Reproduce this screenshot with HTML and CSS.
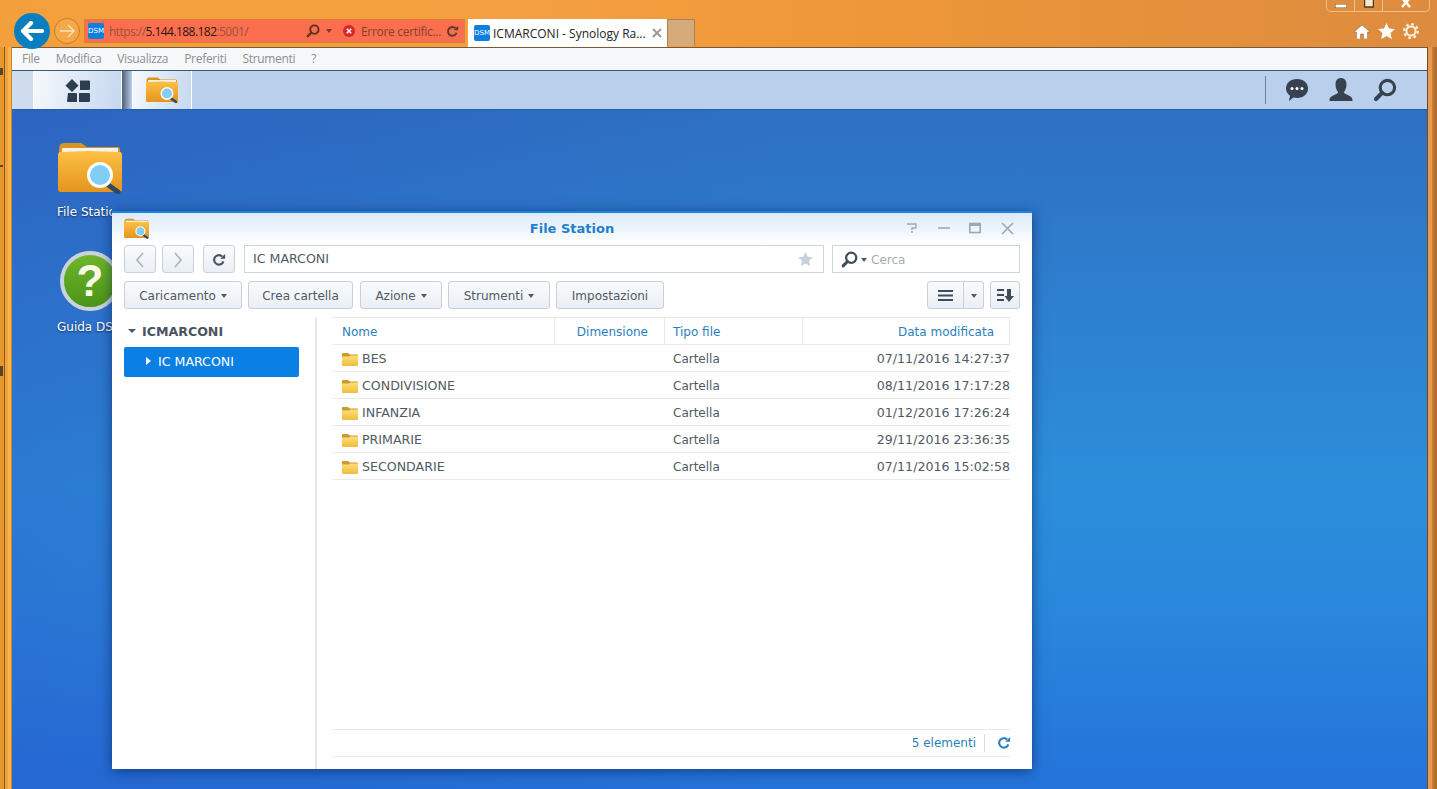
FILE: index.html
```html
<!DOCTYPE html>
<html lang="en">
<head>
    <meta charset="UTF-8">
    <meta name="viewport" content="width=device-width, initial-scale=1.0">
    <title>ICMARCONI - Synology RackStation</title>
    <link rel="stylesheet" href="styles.css">
</head>
<body>
    <svg class="icon-defs" width="0" height="0">
        <defs>
            <linearGradient id="folderBody" x1="0" y1="0" x2="0" y2="1">
                <stop offset="0" stop-color="#fdc044"/>
                <stop offset="1" stop-color="#e4951f"/>
            </linearGradient>
            <linearGradient id="smallFolder" x1="0" y1="0" x2="0" y2="1">
                <stop offset="0" stop-color="#fde07a"/>
                <stop offset="1" stop-color="#f0bc3c"/>
            </linearGradient>
            <symbol id="fs-icon" viewBox="0 0 64 52">
                <path d="M1 8 Q1 1 6 1 H23 L29 5 H60 Q62 5 62 8 V20 H1Z" fill="#d99426"/>
                <rect x="4" y="6" width="56" height="8" fill="#f4f1e6"/>
                <path d="M0 13 Q0 10 3 10 L30 9 L62 10 Q64 10 64 13 V47 Q64 50 61 50 H3 Q0 50 0 47Z" fill="url(#folderBody)"/>
                <path d="M49 42 L60 50" stroke="#2d4a5e" stroke-width="5" stroke-linecap="round"/>
                <circle cx="42" cy="33" r="11.5" fill="#80cdf6" stroke="#fdfdf6" stroke-width="3"/>
            </symbol>
            <symbol id="folder" viewBox="0 0 16 14">
                <path d="M0 2 Q0 1 1 1 H6 L8 2.5 H15 Q16 2.5 16 3.5 V6 H0Z" fill="#c99a30"/>
                <path d="M0 4.5 L7 4.5 L8.5 3.5 H16 V13 Q16 14 15 14 H1 Q0 14 0 13Z" fill="url(#smallFolder)"/>
            </symbol>
            <symbol id="lens" viewBox="0 0 20 20">
                <circle cx="12" cy="8" r="6" fill="none" stroke="currentColor" stroke-width="2.6"/>
                <path d="M7.5 12.5 L2.5 17.5" stroke="currentColor" stroke-width="3.4" stroke-linecap="round"/>
            </symbol>
            <symbol id="reload" viewBox="0 0 16 16">
                <path d="M13 9.5 A5.4 5.4 0 1 1 11.6 4" fill="none" stroke="currentColor" stroke-width="2.4"/>
                <path d="M9.4 6.6 H15 V1Z" fill="currentColor"/>
            </symbol>
        </defs>
    </svg>

    <header class="browser-top">
        <div class="nav-back">
            <svg width="24" height="20" viewBox="0 0 24 20"><path d="M11 2 L3 10 L11 18 M3 10 H22" fill="none" stroke="#fff" stroke-width="4.2" stroke-linecap="round" stroke-linejoin="round"/></svg>
        </div>
        <div class="nav-forward">
            <svg width="16" height="14" viewBox="0 0 16 14"><path d="M9 1 L15 7 L9 13 M1 7 H15" fill="none" stroke="#f7e4c0" stroke-width="1.4"/></svg>
        </div>
        <div class="address-bar">
            <span class="favicon">DSM</span>
            <span class="url">https://<b>5.144.188.182</b>:5001/</span>
            <svg class="addr-lens" width="14" height="14"><use href="#lens"/></svg>
            <span class="addr-caret"></span>
            <svg class="addr-error" width="14" height="14" viewBox="0 0 14 14"><circle cx="7" cy="7" r="6" fill="#d8262c"/><path d="M4.8 4.8 L9.2 9.2 M9.2 4.8 L4.8 9.2" stroke="#fff" stroke-width="1.6"/></svg>
            <span class="addr-error-text">Errore certific...</span>
            <svg class="addr-reload" width="13" height="13"><use href="#reload"/></svg>
        </div>
        <div class="tab">
            <span class="favicon">DSM</span>
            <span class="tab-title">ICMARCONI - Synology Ra...</span>
            <svg width="10" height="10" viewBox="0 0 10 10"><path d="M1 1 L9 9 M9 1 L1 9" stroke="#9a9a9a" stroke-width="2"/></svg>
        </div>
        <div class="tab-new"></div>
        <div class="browser-tools">
            <svg width="16" height="15" viewBox="0 0 16 15"><path d="M8 1 L16 8 H13.5 V15 H9.5 V10 H6.5 V15 H2.5 V8 H0Z" fill="#fff" stroke="#8a6a3a" stroke-width=".5"/></svg>
            <svg width="17" height="16" viewBox="0 0 17 16"><path d="M8.5 0 L11 5.4 L17 6.1 L12.6 10.1 L13.8 16 L8.5 13 L3.2 16 L4.4 10.1 L0 6.1 L6 5.4Z" fill="#fff"/></svg>
            <svg width="16" height="16" viewBox="0 0 16 16"><circle cx="8" cy="8" r="4.6" fill="none" stroke="#fbf3e2" stroke-width="2"/><circle cx="8" cy="8" r="6.8" fill="none" stroke="#fbf3e2" stroke-width="2.4" stroke-dasharray="2.6 2.74"/></svg>
        </div>
        <div class="win-buttons">
            <div class="win-btn win-min"><svg width="12" height="4"><rect width="12" height="4" fill="#fff" stroke="#6b5230"/></svg></div>
            <div class="win-btn win-max"><svg width="10" height="8"><rect x=".5" y="-3" width="9" height="10" fill="#fbe6c8" stroke="#4a3a28" stroke-width="1.5"/></svg></div>
            <div class="win-btn win-close"><svg width="12" height="8" viewBox="0 0 12 8"><path d="M2 -2 L10 7 M10 -2 L2 7" stroke="#fff" stroke-width="2.5"/></svg></div>
        </div>
    </header>

    <div class="page">
        <nav class="menu-bar">
            <a href="#">File</a>
            <a href="#">Modifica</a>
            <a href="#">Visualizza</a>
            <a href="#">Preferiti</a>
            <a href="#">Strumenti</a>
            <a href="#">?</a>
        </nav>

        <div class="taskbar">
            <div class="task-btn task-home">
                <svg width="26" height="24" viewBox="0 0 26 24"><path d="M7 1 L13.5 7.5 L7 14 L.5 7.5Z M15 2.5 H24 Q25 2.5 25 3.5 V11 Q25 12 24 12 H15Z M3 15 H11 A1 1 0 0 1 12 16 V24 H3 A1 1 0 0 1 2 23Z M14 15 H24 A1 1 0 0 1 25 16 V23 A1 1 0 0 1 24 24 H14Z" fill="#2f3e4e"/></svg>
            </div>
            <div class="task-gap"></div>
            <div class="task-btn task-fs">
                <svg width="32" height="26"><use href="#fs-icon"/></svg>
            </div>
            <div class="task-right">
                <svg width="24" height="24" viewBox="0 0 24 24"><path d="M12 1 C18.5 1 23 5 23 10.5 C23 16 18.5 20 12 20 C10.6 20 9.4 19.8 8.4 19.500 L4 23 L5 17.8 C2.6 16 1 13.5 1 10.5 C1 5 5.5 1 12 1Z" fill="#36424f"/><circle cx="7" cy="10.5" r="1.5" fill="#fff"/><circle cx="12" cy="10.5" r="1.5" fill="#fff"/><circle cx="17" cy="10.5" r="1.5" fill="#fff"/></svg>
                <svg width="24" height="24" viewBox="0 0 24 24"><path d="M12 0 C16 0 17.5 3 17.5 6.5 C17.5 10 16 13 14.8 14.3 C15 16.5 23.5 17.3 23.5 22 V23 H.5 V22 C.5 17.3 9 16.5 9.2 14.3 C8 13 6.500 10 6.500 6.500 C6.500 3 8 0 12 0Z" fill="#36424f"/></svg>
                <svg class="task-lens" width="24" height="24"><use href="#lens"/></svg>
            </div>
        </div>

        <main class="desktop">
            <div class="desk-icon desk-fs">
                <svg width="64" height="52"><use href="#fs-icon"/></svg>
                <span>File Station</span>
            </div>
            <div class="desk-icon desk-help">
                <div class="help-ball">?</div>
                <span>Guida DSM</span>
            </div>

            <section class="window">
                <div class="win-title">
                    <svg width="25" height="21"><use href="#fs-icon"/></svg>
                    <h1>File Station</h1>
                    <div class="title-tools">
                        <svg width="12" height="12" viewBox="0 0 12 12"><path d="M1 2 H10 V6 H6 V8 M5 10 H7" fill="none" stroke="#9aa8b6" stroke-width="1.4"/></svg>
                        <svg width="12" height="12" viewBox="0 0 12 12"><path d="M0 6 H12" stroke="#9aa8b6" stroke-width="1.6"/></svg>
                        <svg width="12" height="12" viewBox="0 0 12 12"><rect x=".8" y="1.5" width="10.400" height="9" fill="none" stroke="#9aa8b6" stroke-width="1.6"/><path d="M0 3 H12" stroke="#9aa8b6" stroke-width="2"/></svg>
                        <svg width="13" height="13" viewBox="0 0 13 13"><path d="M1 1 L12 12 M12 1 L1 12" stroke="#9aa8b6" stroke-width="1.6"/></svg>
                    </div>
                </div>

                <div class="toolbar toolbar-nav">
                    <button class="btn btn-icon"><svg width="10" height="16" viewBox="0 0 10 16"><path d="M8 1 L2 8 L8 15" fill="none" stroke="#a9b3bd" stroke-width="1.6"/></svg></button>
                    <button class="btn btn-icon"><svg width="10" height="16" viewBox="0 0 10 16"><path d="M2 1 L8 8 L2 15" fill="none" stroke="#a9b3bd" stroke-width="1.6"/></svg></button>
                    <button class="btn btn-icon btn-reload"><svg width="14" height="14"><use href="#reload"/></svg></button>
                    <div class="path-field">
                        <span>IC MARCONI</span>
                        <svg width="15" height="14" viewBox="0 0 17 16"><path d="M8.5 0 L11 5.4 L17 6.1 L12.6 10.1 L13.8 16 L8.5 13 L3.2 16 L4.4 10.1 L0 6.1 L6 5.4Z" fill="#c6d0da"/></svg>
                    </div>
                    <div class="search-field">
                        <svg width="17" height="17"><use href="#lens"/></svg>
                        <i class="caret"></i>
                        <span>Cerca</span>
                    </div>
                </div>

                <div class="toolbar toolbar-actions">
                    <button class="btn btn-upload">Caricamento <i class="caret"></i></button>
                    <button class="btn btn-create">Crea cartella</button>
                    <button class="btn btn-action">Azione <i class="caret"></i></button>
                    <button class="btn btn-tools">Strumenti <i class="caret"></i></button>
                    <button class="btn btn-settings">Impostazioni</button>
                    <div class="view-group">
                        <button class="btn btn-view"><svg width="15" height="11" viewBox="0 0 15 11"><path d="M0 1 H15 M0 5.500 H15 M0 10 H15" stroke="#3f4c59" stroke-width="2"/></svg></button>
                        <button class="btn btn-view-menu"><i class="caret"></i></button>
                    </div>
                    <button class="btn btn-sort"><svg width="17" height="13" viewBox="0 0 17 13"><path d="M0 1 H7 M0 6 H7 M0 11 H7" stroke="#3f4c59" stroke-width="2"/><path d="M10 0 H14 V7 H17 L12 13 L7.500 7 H10Z" fill="#3f4c59"/></svg></button>
                </div>

                <div class="win-body">
                    <aside class="tree">
                        <div class="tree-root"><i class="caret"></i>ICMARCONI</div>
                        <div class="tree-item"><i class="tree-arrow"></i>IC MARCONI</div>
                    </aside>
                    <div class="files">
                        <div class="file-row file-head">
                            <div class="col-name">Nome</div>
                            <div class="col-size">Dimensione</div>
                            <div class="col-type">Tipo file</div>
                            <div class="col-date">Data modificata</div>
                        </div>
                        <div class="file-row">
                            <div class="col-name"><svg width="16" height="14"><use href="#folder"/></svg>BES</div>
                            <div class="col-size"></div>
                            <div class="col-type">Cartella</div>
                            <div class="col-date">07/11/2016 14:27:37</div>
                        </div>
                        <div class="file-row">
                            <div class="col-name"><svg width="16" height="14"><use href="#folder"/></svg>CONDIVISIONE</div>
                            <div class="col-size"></div>
                            <div class="col-type">Cartella</div>
                            <div class="col-date">08/11/2016 17:17:28</div>
                        </div>
                        <div class="file-row">
                            <div class="col-name"><svg width="16" height="14"><use href="#folder"/></svg>INFANZIA</div>
                            <div class="col-size"></div>
                            <div class="col-type">Cartella</div>
                            <div class="col-date">01/12/2016 17:26:24</div>
                        </div>
                        <div class="file-row">
                            <div class="col-name"><svg width="16" height="14"><use href="#folder"/></svg>PRIMARIE</div>
                            <div class="col-size"></div>
                            <div class="col-type">Cartella</div>
                            <div class="col-date">29/11/2016 23:36:35</div>
                        </div>
                        <div class="file-row">
                            <div class="col-name"><svg width="16" height="14"><use href="#folder"/></svg>SECONDARIE</div>
                            <div class="col-size"></div>
                            <div class="col-type">Cartella</div>
                            <div class="col-date">07/11/2016 15:02:58</div>
                        </div>
                        <div class="status-bar">
                            <span class="status-count">5 elementi</span>
                            <svg width="14" height="14"><use href="#reload"/></svg>
                        </div>
                    </div>
                </div>
            </section>
        </main>
    </div>
</body>
</html>
```

FILE: styles.css
```css
* {
    box-sizing: border-box;
}
body {
    margin: 0;
    width: 1437px;
    height: 789px;
    overflow: hidden;
    padding: 0 10px 0 12px;
    font-family: "DejaVu Sans", Verdana, sans-serif;
    font-size: 12px;
    color: #505a64;
    background:
        linear-gradient(#5a4426, #5a4426) 0 68px / 3px 7px no-repeat,
        linear-gradient(#5a4426, #5a4426) 0 165px / 3px 2px no-repeat,
        linear-gradient(#5a4426, #5a4426) 0 366px / 3px 10px no-repeat,
        linear-gradient(90deg, #e8962e 0 4px, #7d5a22 4px 5px, #f2a23a 5px 8px, #fbb348 8px 11px, #c98a34 11px 12px) left 47px / 12px 742px no-repeat,
        linear-gradient(90deg, #6f4a26 0 1px, #e59a50 1px 5px, #c47a30 5px 7px, #b56c2c 7px 10px) right 47px / 10px 742px no-repeat,
        linear-gradient(90deg, #f39f3c 0%, #f5a040 35%, #ee9738 60%, #dd8b3f 100%);
}
.icon-defs {
    position: absolute;
}
.browser-top {
    position: relative;
    height: 47px;
    margin-left: -12px;
    margin-right: -10px;
    display: flex;
    padding: 19px 0 0 84px;
    font-family: "Open Sans", sans-serif;
}
.nav-back {
    position: absolute;
    left: 14px;
    top: 13px;
    width: 36px;
    height: 36px;
    border-radius: 50%;
    background: #0a7fc0;
    display: flex;
    align-items: center;
    justify-content: center;
    z-index: 1;
}
.nav-forward {
    position: absolute;
    left: 54px;
    top: 18px;
    width: 26px;
    height: 26px;
    border-radius: 50%;
    border: 1px solid #c97f22;
    background: #f4a848;
    display: flex;
    align-items: center;
    justify-content: center;
}
.address-bar {
    width: 381px;
    height: 24px;
    display: flex;
    align-items: center;
    padding-left: 3px;
    background: #fb6f4e;
    border: 1px solid #d9803a;
    color: #9a5240;
}
.favicon {
    width: 16px;
    height: 16px;
    flex: none;
    border-radius: 2px;
    background: #0d7fe0;
    color: #fff;
    font-family: "DejaVu Sans", sans-serif;
    font-size: 7px;
    line-height: 16px;
    text-align: center;
}
.url {
    margin-left: 5px;
    width: 197px;
    white-space: nowrap;
    letter-spacing: -.55px;
}
.url b {
    font-weight: normal;
    color: #2a1510;
}
.addr-lens {
    color: #5d3020;
    flex: none;
}
.addr-caret {
    width: 0;
    height: 0;
    margin-left: 6px;
    border: 3px solid transparent;
    border-top: 4px solid #7a3a28;
    border-bottom: 0;
}
.addr-error {
    margin-left: 10px;
    flex: none;
}
.addr-error-text {
    margin-left: 5px;
    width: 85px;
    flex: none;
    white-space: nowrap;
    letter-spacing: -.3px;
    color: #7d4234;
}
.addr-reload {
    margin-left: 0;
    flex: none;
    color: #5d3c30;
}
.tab {
    width: 199px;
    height: 28px;
    margin-left: 3px;
    padding: 0 5px 0 6px;
    display: flex;
    align-items: center;
    background: #fff;
    color: #222;
    position: relative;
    z-index: 1;
}
.tab-title {
    margin-left: 3px;
    width: 159px;
    flex: none;
    white-space: nowrap;
}
.tab-new {
    width: 28px;
    height: 27px;
    background: #d6ab7c;
    border: 1px solid #a88458;
    border-bottom: 0;
}
.browser-tools {
    position: absolute;
    left: 1354px;
    top: 23px;
    width: 65px;
    display: flex;
    align-items: center;
    justify-content: space-between;
}
.win-buttons {
    position: absolute;
    left: 1326px;
    top: 0;
    height: 12px;
    display: flex;
    border: 1px solid #f0c088;
    border-top: 0;
    border-radius: 0 0 5px 5px;
}
.win-btn {
    display: flex;
    align-items: flex-end;
    justify-content: center;
    padding-bottom: 3px;
    border-left: 1px solid #f0c088;
}
.win-min {
    width: 27px;
    border-left: 0;
}
.win-max {
    width: 28px;
}
.win-close {
    width: 47px;
}
.page {
    height: 742px;
    display: flex;
    flex-direction: column;
    border-top: 1px solid #7a5a36;
}
.menu-bar {
    height: 22px;
    display: flex;
    align-items: center;
    gap: 16px;
    padding: 0 0 2px 10px;
    background: #f7f8f9;
    font-family: "Open Sans", sans-serif;
    letter-spacing: -.3px;
}
.menu-bar a {
    color: #8b8f94;
    text-decoration: none;
}
.taskbar {
    height: 40px;
    display: flex;
    background: linear-gradient(90deg, #cfdcee 0 21px, #b9cfec 21px);
    border-top: 1px solid #3c5a78;
    border-bottom: 1px solid #1f60b4;
}
.task-btn {
    display: flex;
    align-items: center;
    justify-content: center;
    background: linear-gradient(100deg, #f6f9fd, #c6d7ef);
    border-left: 1px solid #fff;
    border-right: 1px solid #fff;
    height: 100%;
}
.task-home {
    margin-left: 21px;
    width: 89px;
}
.task-gap {
    width: 10px;
    background: linear-gradient(90deg, #4d5f78, #b9cfec);
}
.task-fs {
    width: 60px;
}
.task-right {
    margin-left: auto;
    margin-right: 30px;
    display: flex;
    align-items: center;
    gap: 20px;
    height: 100%;
    padding-left: 20px;
    position: relative;
    color: #36424f;
}
.task-right::before {
    content: "";
    position: absolute;
    left: 0;
    top: 5px;
    bottom: 5px;
    width: 1px;
    background: #6f86a3;
}
.desktop {
    flex: 1;
    position: relative;
    background:
        linear-gradient(90deg, rgba(40,70,190,.28), rgba(40,70,190,0) 55%),
        linear-gradient(#2e70c2 0%, #2d80d0 30%, #2c8eda 55%, #2a88dc 72%, #2473da 100%);
}
.desk-icon {
    position: absolute;
    left: 34px;
    width: 88px;
    display: flex;
    flex-direction: column;
    align-items: center;
    color: #fff;
    text-shadow: 0 1px 2px rgba(0,0,0,.6);
    white-space: nowrap;
}
.desk-icon span {
    align-self: flex-start;
    width: 66px;
    padding-left: 11px;
    overflow: hidden;
}
.desk-fs {
    top: 32px;
}
.desk-fs span {
    margin-top: 11px;
}
.desk-help {
    top: 141px;
}
.desk-help span {
    margin-top: 9px;
}
.help-ball {
    width: 60px;
    height: 60px;
    border-radius: 50%;
    border: 4px solid #c9d3da;
    background: linear-gradient(#6fb62c, #4a9418);
    color: #fbfbe8;
    font-family: "Liberation Sans", sans-serif;
    font-weight: bold;
    font-size: 44px;
    line-height: 52px;
    text-align: center;
    text-shadow: none;
}
.window {
    position: absolute;
    left: 100px;
    top: 101px;
    width: 920px;
    height: 558px;
    display: flex;
    flex-direction: column;
    background: #fff;
    border-top: 2px solid #1585e4;
    box-shadow: 0 2px 12px rgba(0,20,70,.55);
}
.win-title {
    height: 32px;
    flex: none;
    display: flex;
    align-items: center;
    padding: 0 12px 2px;
    position: relative;
    background: linear-gradient(#dcebf8, #fff);
}
.win-title h1 {
    position: absolute;
    left: 0;
    right: 0;
    margin: 0;
    font-size: 13px;
    text-align: center;
    color: #1f7fd0;
}
.title-tools {
    margin-left: auto;
    margin-right: 6px;
    width: 108px;
    display: flex;
    align-items: center;
    justify-content: space-between;
    position: relative;
}
.toolbar {
    flex: none;
    display: flex;
    align-items: center;
    padding: 0 12px;
}
.toolbar-nav {
    height: 28px;
}
.toolbar-actions {
    height: 28px;
    margin-top: 8px;
}
.btn {
    height: 28px;
    padding: 1px 0 0;
    font: inherit;
    color: #505a64;
    background: linear-gradient(#f9fbfd, #eaeff5);
    border: 1px solid #c8d0da;
    border-radius: 3px;
    display: flex;
    align-items: center;
    justify-content: center;
    gap: 5px;
}
.btn-icon {
    width: 32px;
    margin-right: 6px;
}
.btn-reload {
    margin-left: 3px;
    margin-right: 9px;
    color: #46535f;
}
.path-field {
    width: 580px;
    height: 28px;
    display: flex;
    align-items: center;
    justify-content: space-between;
    padding: 0 10px 1px 8px;
    border: 1px solid #ccd4dd;
    font-size: 12.6px;
    color: #505a64;
}
.search-field {
    width: 188px;
    height: 28px;
    margin-left: 8px;
    display: flex;
    align-items: center;
    padding: 1px 0 0 8px;
    border: 1px solid #ccd4dd;
    color: #a4acb4;
}
.search-field svg {
    color: #3f4c59;
}
.search-field .caret {
    margin: 0 4px 0 3px;
}
.caret {
    display: inline-block;
    width: 0;
    height: 0;
    border: 3.5px solid transparent;
    border-top: 4px solid #505a64;
    border-bottom: 0;
}
.btn-upload {
    width: 118px;
}
.btn-create {
    width: 105px;
    margin-left: 6px;
}
.btn-action {
    width: 82px;
    margin-left: 7px;
}
.btn-tools {
    width: 102px;
    margin-left: 6px;
}
.btn-settings {
    width: 108px;
    margin-left: 6px;
}
.view-group {
    display: flex;
    margin-left: auto;
}
.btn-view {
    width: 37px;
    border-radius: 3px 0 0 3px;
}
.btn-view-menu {
    width: 20px;
    border-left: 0;
    border-radius: 0 3px 3px 0;
}
.btn-sort {
    width: 30px;
    margin-left: 6px;
}
.win-body {
    flex: 1;
    display: flex;
    margin-top: 8px;
    min-height: 0;
}
.tree {
    width: 205px;
    flex: none;
    padding: 0 16px 0 12px;
    border-right: 2px solid #e4e8ec;
}
.tree-root {
    height: 30px;
    display: flex;
    align-items: center;
    gap: 6px;
    padding: 0 0 2px 4px;
    font-size: 12.6px;
    font-weight: bold;
    color: #4a545e;
}
.tree-root .caret {
    border-width: 4px;
    border-bottom: 0;
}
.tree-item {
    height: 30px;
    display: flex;
    align-items: center;
    gap: 7px;
    padding: 0 0 2px 22px;
    background: #0a80e4;
    border-radius: 2px;
    font-size: 12.6px;
    color: #fff;
}
.tree-arrow {
    width: 0;
    height: 0;
    border: 4px solid transparent;
    border-left: 5px solid #fff;
    border-right: 0;
}
.files {
    flex: 1;
    display: flex;
    flex-direction: column;
    padding: 0 22px 12px 15px;
}
.file-row {
    height: 27px;
    flex: none;
    display: flex;
    align-items: center;
    padding-top: 1px;
    border-bottom: 1px solid #e8ebee;
}
.col-name {
    width: 223px;
    height: 100%;
    padding-left: 10px;
    display: flex;
    align-items: center;
    gap: 4px;
    font-size: 12.6px;
    white-space: nowrap;
}
.col-size {
    width: 110px;
    height: 100%;
    padding-right: 16px;
    display: flex;
    align-items: center;
    justify-content: flex-end;
}
.col-type {
    width: 138px;
    height: 100%;
    padding-left: 8px;
    display: flex;
    align-items: center;
}
.col-date {
    flex: 1;
    height: 100%;
    display: flex;
    align-items: center;
    justify-content: flex-end;
    font-size: 12.6px;
}
.file-head {
    height: 28px;
    padding-top: 0;
    border-top: 1px solid #e8ebee;
    color: #2a7fc0;
}
.file-head .col-name,
.file-head .col-size,
.file-head .col-type,
.file-head .col-date {
    font-size: 12px;
    padding-top: 2px;
    border-right: 1px solid #e8ebee;
}
.file-head .col-date {
    padding-right: 15px;
}
.status-bar {
    margin-top: auto;
    height: 28px;
    flex: none;
    display: flex;
    align-items: center;
    justify-content: flex-end;
    border-top: 1px solid #e8ebee;
    border-bottom: 1px solid #e8ebee;
    color: #2a7fc0;
}
.status-count {
    padding-right: 8px;
    margin-right: 12px;
    border-right: 1px solid #d8dde2;
    line-height: 18px;
}
.status-bar svg {
    margin-right: -1px;
}
```
